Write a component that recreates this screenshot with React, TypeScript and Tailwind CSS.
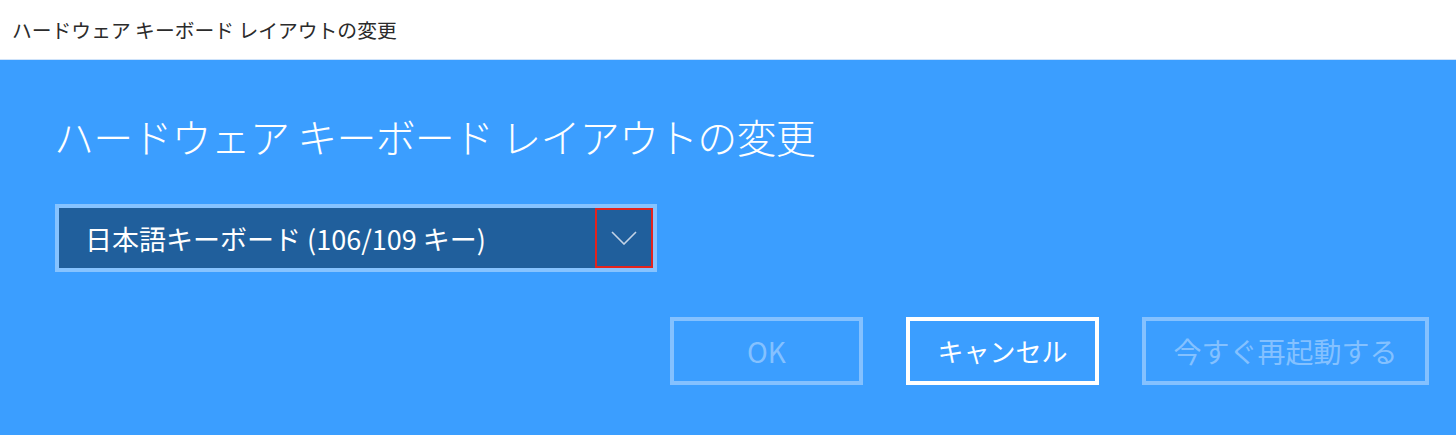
const font = { fontFamily: '"Noto Sans CJK JP", "Noto Sans", sans-serif' };

const Chevron = () => (
  <svg width="26" height="14" viewBox="0 0 26 14" fill="none">
    <polyline points="1,1 13,13 25,1" stroke="#c3d3e6" strokeWidth="1.6" />
  </svg>
);

const App = () => {
  return (
    <div className="w-[1456px] h-[435px] flex flex-col overflow-hidden" style={font}>
      {/* window title */}
      <div className="h-[60px] shrink-0 bg-white flex items-center pl-[12px] border-b border-[#cfe3fa]">
        <span className="text-[19.8px] leading-none text-[#2b2b2b]">ハードウェア キーボード レイアウトの変更</span>
      </div>

      <div className="flex-1 bg-[#3b9eff] pl-[56px] pr-[27px] pt-[56px] flex flex-col">
        <h1 className="text-[40px] leading-[40px] font-light text-white tracking-[-0.8px] -ml-[2px]">
          ハードウェア キーボード レイアウトの変更
        </h1>

        <div className="mt-[48px] w-[602px] h-[68px] -ml-[1px] border-4 border-[#86c3ff] bg-[#205f9c] flex items-center">
          <span className="flex-1 pl-[26px] text-[27px] leading-none text-white">
            日本語キーボード (106/109 キー)
          </span>
          <div className="w-[58px] h-full shadow-[inset_0_0_0_2px_#e3231d] flex items-center justify-center">
            <Chevron />
          </div>
        </div>

        <div className="mt-[45px] flex justify-end gap-[43px]">
          <button className="w-[193px] h-[68px] border-4 border-[#84c1ff] text-[28px] leading-none text-[#84c1ff]">
            OK
          </button>
          <button className="w-[193px] h-[68px] border-4 border-white text-[26px] leading-none text-white">
            キャンセル
          </button>
          <button className="w-[287px] h-[68px] border-4 border-[#84c1ff] text-[28px] leading-none text-[#84c1ff]">
            今すぐ再起動する
          </button>
        </div>
      </div>
    </div>
  );
};

export default App;
